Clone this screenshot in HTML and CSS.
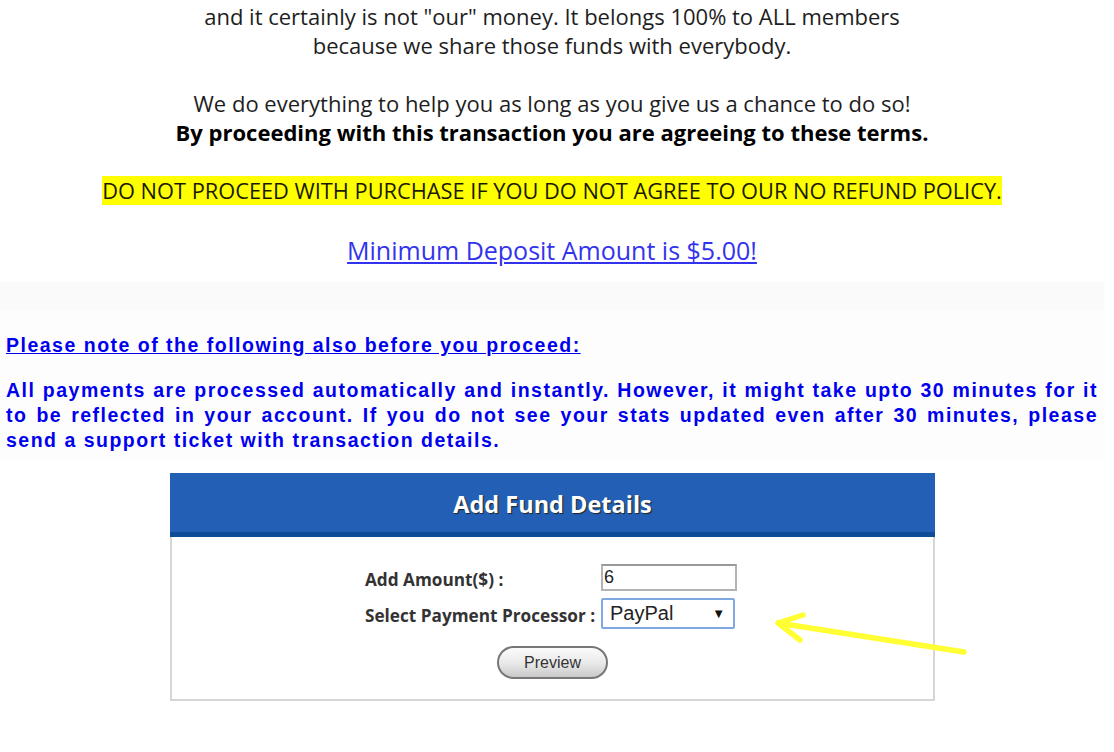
FILE: index.html
```html
<!DOCTYPE html>
<html>
<head>
<meta charset="utf-8">
<link rel="stylesheet" href="styles.css">
</head>
<body>
<div class="page">
  <div class="intro">
    <p class="lines">and it certainly is not "our" money. It belongs 100% to ALL members<br>because we share those funds with everybody.</p>
    <p class="lines">We do everything to help you as long as you give us a chance to do so!<br><b>By proceeding with this transaction you are agreeing to these terms.</b></p>
    <p class="warn"><span class="hl">DO NOT PROCEED WITH PURCHASE IF YOU DO NOT AGREE TO OUR NO REFUND POLICY.</span></p>
    <p class="min"><a href="#">Minimum Deposit Amount is $5.00!</a></p>
  </div>
  <div class="band"></div>
  <div class="notes">
    <p class="note-title"><a href="#">Please note of the following also before you proceed:</a></p>
    <p class="note-body">All payments are processed automatically and instantly. However, it might take upto 30 minutes for it to be reflected in your account. If you do not see your stats updated even after 30 minutes, please send a support ticket with transaction details.</p>
  </div>
  <div class="panel-wrap">
    <div class="panel">
      <div class="panel-head">Add Fund Details</div>
      <div class="panel-body">
        <div class="form">
          <label class="lbl">Add Amount($) :</label>
          <div class="field"><span class="input">6</span></div>
          <label class="lbl">Select Payment Processor :</label>
          <div class="field"><span class="select"><span>PayPal</span><span class="caret">&#9660;</span></span></div>
        </div>
        <div class="actions"><span class="btn">Preview</span></div>
      </div>
    </div>
    <svg class="arrow" width="200" height="60" viewBox="0 0 200 60">
      <path d="M194 53 L8 24 M8 24 L33 16 M8 24 L30 41" stroke="#ffff33" stroke-width="5.5" stroke-linecap="round" stroke-linejoin="round" fill="none"/>
    </svg>
  </div>
</div>
</body>
</html>
```
FILE: styles.css
```css
html, body { margin: 0; padding: 0; background: #fff; }
.page { width: 1104px; }
.intro {
  font-family: "Open Sans", sans-serif;
  color: #1e1e1e;
  text-align: center;
  font-size: 22px;
  line-height: 29px;
}
.intro p { margin: 0; }
.lines { margin-bottom: 29px !important; }
.lines:first-child { padding-top: 2px; }
.lines b { font-weight: 700; color: #000; }
.warn { padding-top: 1px; line-height: 27px; font-size: 21.8px; }
.hl { background: #ffff00; color: #1a1a00; }
.min { font-size: 25px; padding-top: 31px; line-height: 30px; }
.min a { color: #3333ee; }
.band { height: 28px; margin-top: 17px; background: #fafafa; }
.notes {
  font-family: "Liberation Sans", Arial, sans-serif;
  font-weight: bold;
  color: #0000ee;
  font-size: 19.5px;
  padding: 0 6px;
  background: #fdfdfd;
}
.notes p { margin: 0; }
.note-title { padding-top: 22px; line-height: 26px; }
.note-title a { color: #0000ee; letter-spacing: 1.5px; }
.note-body { margin-top: 20px !important; line-height: 25px; text-align: justify; letter-spacing: 1.5px; padding-bottom: 8px; }
.panel-wrap { position: relative; padding-top: 12px; }
.panel {
  width: 765px;
  margin-left: 170px;
}
.panel-head {
  background: #2360b5;
  border-bottom: 5px solid #0e4b98;
  height: 59px;
  line-height: 62px;
  text-align: center;
  color: #fff;
  font-family: "Open Sans", sans-serif;
  font-weight: 700;
  font-size: 23.5px;
  text-shadow: 1px 1px 1px #222;
}
.panel-body {
  border: 2px solid #d6d6d6;
  border-top: 0;
  height: 164px;
  box-sizing: border-box;
  padding-top: 27px;
}
.form {
  display: grid;
  grid-template-columns: 236px 136px;
  justify-content: center;
  row-gap: 7px;
  margin-left: -3px;
  align-items: center;
}
.lbl {
  font-family: "Open Sans", sans-serif;
  font-weight: 700;
  font-size: 17.2px;
  color: #333;
  white-space: nowrap;
  padding-top: 4px;
}
.input {
  display: block;
  height: 27px;
  box-sizing: border-box;
  border: 2px solid #b3b3b3;
  border-top-color: #999;
  padding-left: 1px;
  font-family: "Liberation Sans", Arial, sans-serif;
  font-size: 18px;
  line-height: 23px;
  color: #222;
}
.select {
  display: flex;
  justify-content: space-between;
  align-items: center;
  width: 134px;
  height: 31px;
  box-sizing: border-box;
  border: 2px solid #7fa8e0;
  border-radius: 2px;
  padding: 0 8px 0 7px;
  font-family: "Liberation Sans", Arial, sans-serif;
  font-size: 20px;
  color: #222;
}
.caret { font-size: 13px; color: #111; }
.actions { text-align: center; padding-top: 17px; }
.btn {
  display: inline-block;
  width: 111px;
  height: 33px;
  box-sizing: border-box;
  border: 2px solid #777;
  border-radius: 17px;
  background: linear-gradient(#fbfbfb, #e8e8e8 55%, #c9c9c9);
  font-family: "Liberation Sans", Arial, sans-serif;
  font-size: 16px;
  line-height: 29px;
  color: #333;
  text-align: center;
}
.arrow { position: absolute; left: 770px; top: 138px; }
```
